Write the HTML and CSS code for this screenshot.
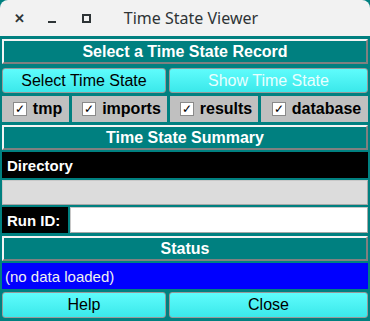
FILE: index.html
```html
<!DOCTYPE html>
<html lang="en">

<head>
    <meta charset="UTF-8">
    <title>Time State Viewer</title>
    <link rel="stylesheet" href="styles.css">
</head>

<body>
    <div class="window">
        <div class="titlebar">
            <div class="controls">
                <span class="ctl ctl-close">&#x2715;</span>
                <span class="ctl ctl-min"></span>
                <span class="ctl ctl-max"></span>
            </div>
            <div class="title">Time State Viewer</div>
        </div>

        <div class="content">
            <div class="frame-head first">Select a Time State Record</div>

            <div class="btn-row gap4">
                <button class="btn">Select Time State</button>
                <button class="btn disabled">Show Time State</button>
            </div>

            <div class="check-row">
                <label class="check"><span class="box">&#x2713;</span>tmp</label>
                <label class="check"><span class="box">&#x2713;</span>imports</label>
                <label class="check"><span class="box">&#x2713;</span>results</label>
                <label class="check"><span class="box">&#x2713;</span>database</label>
            </div>

            <div class="frame-head gap3">Time State Summary</div>

            <div class="black-bar gap2">Directory</div>
            <div class="gray-bar gap2"></div>

            <div class="run-row gap2">
                <div class="run-label">Run ID:</div>
                <div class="run-input"></div>
            </div>

            <div class="frame-head gap3">Status</div>
            <div class="status-bar gap2">(no data loaded)</div>

            <div class="btn-row gap3">
                <button class="btn tall">Help</button>
                <button class="btn tall">Close</button>
            </div>
        </div>
    </div>
</body>

</html>
```

FILE: styles.css
```css
body {
    margin: 0;
    background-color: #fff;
    font-family: "Liberation Sans", Arial, sans-serif;
}

.window {
    width: 370px;
    height: 321px;
    background-color: #008080;
    overflow: hidden;
}

.titlebar {
    height: 36px;
    background-color: #f2f2f2;
    border-radius: 8px 8px 0 0;
    position: relative;
    display: flex;
    align-items: center;
    justify-content: center;
}

.controls {
    position: absolute;
    left: 12px;
    top: 0;
    height: 36px;
    display: flex;
    align-items: center;
}

.ctl {
    display: inline-block;
    color: #2e3436;
}

.ctl-close {
    font-size: 13px;
    font-weight: bold;
    width: 14px;
    text-align: center;
}

.ctl-min {
    width: 8px;
    height: 2px;
    background-color: #2e3436;
    margin-left: 22px;
    margin-top: 8px;
}

.ctl-max {
    width: 5px;
    height: 5px;
    border: 2px solid #2e3436;
    margin-left: 26px;
}

.title {
    font-family: "Noto Sans", sans-serif;
    font-size: 16px;
    color: #2e3436;
    margin-left: 12px;
}

.content {
    padding: 0 2px;
    display: flex;
    flex-direction: column;
}

.first {
    margin-top: 3px;
}

.gap2 {
    margin-top: 2px;
}

.gap3 {
    margin-top: 3px;
}

.gap4 {
    margin-top: 4px;
}

.frame-head {
    height: 25px;
    box-sizing: border-box;
    border: 2px solid;
    border-color: #f4f4f4 #808080 #808080 #f4f4f4;
    color: #fff;
    font-weight: bold;
    font-size: 16px;
    display: flex;
    align-items: center;
    justify-content: center;
}

.btn-row {
    display: grid;
    grid-template-columns: 164px 1fr;
    gap: 3px;
}

.btn {
    height: 25px;
    box-sizing: border-box;
    border: 1px solid #999;
    border-radius: 3px;
    background: linear-gradient(#5ffcfc, #3be8ea);
    font-family: "Liberation Sans", Arial, sans-serif;
    font-size: 16px;
    color: #000;
    padding: 0;
}

.btn.tall {
    height: 26px;
}

.btn.disabled {
    color: #e8ffff;
}

.check-row {
    margin-top: 3px;
    display: grid;
    grid-template-columns: 67px 95px 88px 1fr;
    gap: 3px;
}

.check {
    height: 26px;
    box-sizing: border-box;
    padding-left: 4px;
    background-color: #c0c0c0;
    display: flex;
    align-items: center;
    justify-content: center;
    font-weight: bold;
    font-size: 16px;
    color: #000;
}

.box {
    width: 12px;
    height: 12px;
    background-color: #fff;
    border: 1px solid #8a8a8a;
    margin-right: 6px;
    font-size: 12px;
    line-height: 12px;
    text-align: center;
    font-weight: normal;
}

.black-bar {
    height: 26px;
    background-color: #000;
    color: #fff;
    font-weight: bold;
    font-size: 15px;
    display: flex;
    align-items: center;
    padding-left: 5px;
}

.gray-bar {
    height: 25px;
    box-sizing: border-box;
    background-color: #dcdcdc;
    border: 1px solid;
    border-color: #c8c8c8 #a8a8a8 #a8a8a8 #c8c8c8;
}

.run-row {
    height: 26px;
    display: flex;
    gap: 2px;
}

.run-label {
    width: 66px;
    background-color: #000;
    color: #fff;
    font-weight: bold;
    font-size: 15px;
    display: flex;
    align-items: center;
    padding-left: 5px;
    box-sizing: border-box;
}

.run-input {
    flex: 1;
    background-color: #fff;
    border: 1px solid;
    border-color: #c8c8c8 #a8a8a8 #a8a8a8 #c8c8c8;
}

.status-bar {
    height: 26px;
    background-color: #0000ff;
    color: #f0f0f0;
    font-size: 15px;
    display: flex;
    align-items: center;
    padding-left: 3px;
}
```
